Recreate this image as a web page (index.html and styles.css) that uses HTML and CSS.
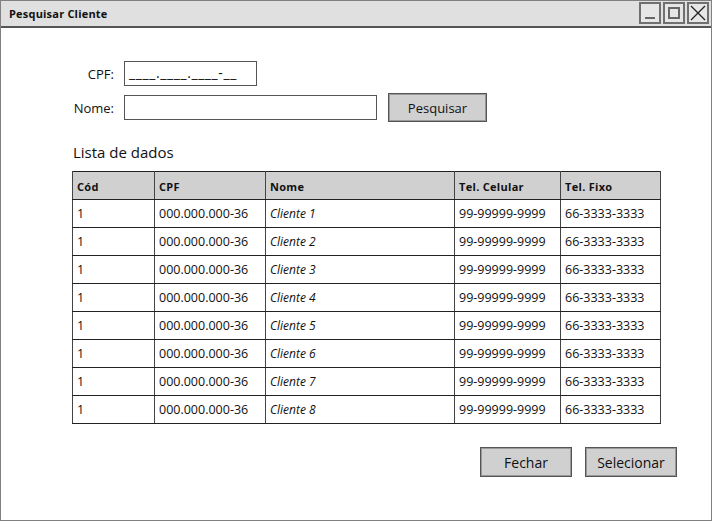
FILE: index.html
```html
<!DOCTYPE html>
<html lang="pt">
<head>
<meta charset="utf-8">
<title>Pesquisar Cliente</title>
<link rel="stylesheet" href="styles.css">
</head>
<body>
<div class="window">
  <div class="titlebar">
    <span class="title">Pesquisar Cliente</span>
    <div class="winbtns">
      <span class="winbtn"><svg width="18" height="18" viewBox="0 0 18 18"><line x1="4" y1="14" x2="14" y2="14" stroke="#666" stroke-width="2"/></svg></span>
      <span class="winbtn"><svg width="18" height="18" viewBox="0 0 18 18"><rect x="4" y="4" width="10" height="10" fill="none" stroke="#666" stroke-width="2"/></svg></span>
      <span class="winbtn"><svg width="18" height="18" viewBox="0 0 18 18"><path d="M2 2 L16 16 M16 2 L2 16" stroke="#222" stroke-width="1.3" fill="none"/></svg></span>
    </div>
  </div>
  <div class="content">
    <div class="form">
      <label class="lbl">CPF:</label>
      <div class="field cpf">____.____.____-__</div>
      <span></span>
      <label class="lbl">Nome:</label>
      <div class="field nome"></div>
      <button class="btn search">Pesquisar</button>
    </div>
    <div class="list-title">Lista de dados</div>
    <table class="grid">
      <colgroup>
        <col class="c1"><col class="c2"><col class="c3"><col class="c4"><col class="c5">
      </colgroup>
      <thead>
        <tr><th>Cód</th><th>CPF</th><th>Nome</th><th>Tel. Celular</th><th>Tel. Fixo</th></tr>
      </thead>
      <tbody>
        <tr><td>1</td><td>000.000.000-36</td><td class="it">Cliente 1</td><td>99-99999-9999</td><td>66-3333-3333</td></tr>
        <tr><td>1</td><td>000.000.000-36</td><td class="it">Cliente 2</td><td>99-99999-9999</td><td>66-3333-3333</td></tr>
        <tr><td>1</td><td>000.000.000-36</td><td class="it">Cliente 3</td><td>99-99999-9999</td><td>66-3333-3333</td></tr>
        <tr><td>1</td><td>000.000.000-36</td><td class="it">Cliente 4</td><td>99-99999-9999</td><td>66-3333-3333</td></tr>
        <tr><td>1</td><td>000.000.000-36</td><td class="it">Cliente 5</td><td>99-99999-9999</td><td>66-3333-3333</td></tr>
        <tr><td>1</td><td>000.000.000-36</td><td class="it">Cliente 6</td><td>99-99999-9999</td><td>66-3333-3333</td></tr>
        <tr><td>1</td><td>000.000.000-36</td><td class="it">Cliente 7</td><td>99-99999-9999</td><td>66-3333-3333</td></tr>
        <tr><td>1</td><td>000.000.000-36</td><td class="it">Cliente 8</td><td>99-99999-9999</td><td>66-3333-3333</td></tr>
      </tbody>
    </table>
    <div class="actions">
      <button class="btn act">Fechar</button>
      <button class="btn act">Selecionar</button>
    </div>
  </div>
</div>
</body>
</html>
```
FILE: styles.css
```css
* { box-sizing: border-box; }
html, body { margin: 0; padding: 0; background: #fff; }
body {
  font-family: "Comic Sans MS", "Open Sans", "DejaVu Sans", sans-serif;
  color: #111;
}
.window {
  width: 712px;
  height: 521px;
  border: 1px solid #808080;
  background: #fff;
  display: flex;
  flex-direction: column;
}
.titlebar {
  height: 27px;
  background: #e0e0e0;
  border-bottom: 2px solid #555;
  display: flex;
  align-items: center;
  justify-content: space-between;
  padding: 0 2px 0 8px;
}
.title {
  font-size: 11px;
  font-weight: bold;
  letter-spacing: 0.2px;
}
.winbtns { display: flex; gap: 2px; margin-top: -1px; }
.winbtn {
  width: 22px;
  height: 22px;
  border: 2px solid #707070;
  background: #e6e6e6;
  display: flex;
  align-items: center;
  justify-content: center;
}
.content {
  padding: 33px 0 0 71px;
  flex: 1;
  display: flex;
  flex-direction: column;
}
.form {
  display: grid;
  grid-template-columns: 42px 253px auto;
  column-gap: 10px;
  row-gap: 7px;
  align-items: center;
}
.lbl {
  font-size: 13px;
  text-align: right;
  white-space: nowrap;
}
.field {
  height: 25px;
  border: 1px solid #555;
  background: #fff;
  font-size: 13px;
  padding: 1px 4px;
  line-height: 20px;
}
.cpf { width: 133px; font-size: 14px; letter-spacing: 0.6px; }
.nome { width: 253px; }
.btn {
  font-family: inherit;
  font-size: 13px;
  color: #111;
  background: #d0d0d0;
  border: 1px solid #555;
  box-shadow: inset 0 0 0 1px #999;
  padding: 0;
}
.search { width: 99px; height: 29px; margin-left: 1px; }
.list-title {
  font-size: 15px;
  margin-top: 20px;
  margin-left: 1px;
  height: 20px;
  line-height: 20px;
}
.grid {
  margin-top: 9px;
  border-collapse: collapse;
  width: 588px;
  table-layout: fixed;
  border: 1px solid #222;
}
.c1 { width: 82px; }
.c2 { width: 111px; }
.c3 { width: 189px; }
.c4 { width: 106px; }
.c5 { width: 100px; }
.grid th, .grid td {
  height: 28px;
  padding: 0 4px;
  text-align: left;
  border-left: 1px solid #444;
  border-right: 1px solid #444;
  border-bottom: 1px solid #222;
  white-space: nowrap;
  overflow: hidden;
  color: #111;
}
.grid th {
  background: #d0d0d0;
  font-size: 11px;
  font-weight: bold;
  letter-spacing: 0.3px;
  padding-top: 2px;
}
.grid td { font-size: 12.5px; }
.grid td.it { font-style: italic; font-size: 12px; }
.actions {
  display: flex;
  justify-content: flex-end;
  gap: 13px;
  margin-top: 23px;
  width: 605px;
}
.act { width: 92px; height: 30px; font-size: 14px; }
```
